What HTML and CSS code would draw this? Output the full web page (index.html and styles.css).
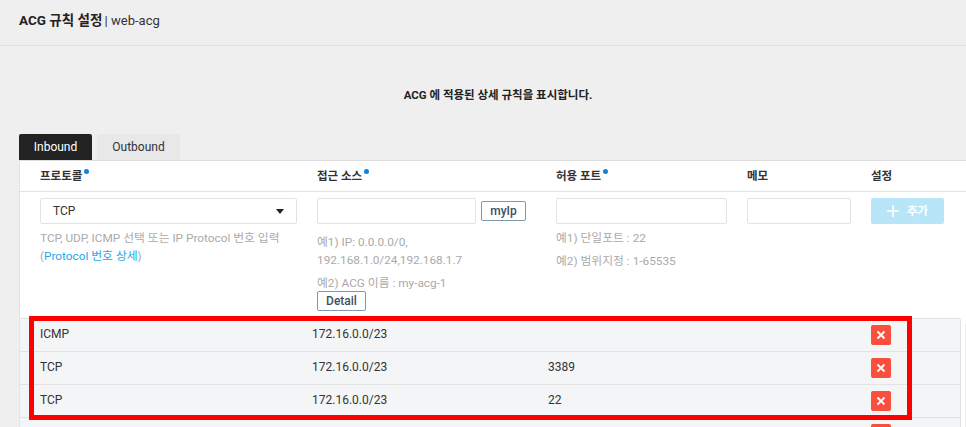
FILE: index.html
```html
<!DOCTYPE html>
<html lang="ko">
<head>
<meta charset="utf-8">
<title>ACG 규칙 설정</title>
<link rel="stylesheet" href="styles.css">
</head>
<body>
<header class="top"><strong>ACG 규칙 설정</strong> | web-acg</header>
<p class="notice">ACG 에 적용된 상세 규칙을 표시합니다.</p>
<nav class="tabs">
  <span class="tab active">Inbound</span>
  <span class="tab">Outbound</span>
</nav>
<section class="panel">
  <div class="cols head">
    <div>프로토콜<i class="dot"></i></div>
    <div>접근 소스<i class="dot"></i></div>
    <div>허용 포트<i class="dot"></i></div>
    <div>메모</div>
    <div>설정</div>
  </div>
  <div class="cols form">
    <div>
      <div class="field select">TCP<span class="caret"></span></div>
      <p class="hint first">TCP, UDP, ICMP 선택 또는 IP Protocol 번호 입력<br>(<a class="link">Protocol 번호 상세</a>)</p>
    </div>
    <div>
      <div class="source">
        <div class="field src-input"></div>
        <span class="btn myip">myIp</span>
      </div>
      <p class="hint src1">예1) IP: 0.0.0.0/0,<br>192.168.1.0/24,192.168.1.7</p>
      <p class="hint src2">예2) ACG 이름 : my-acg-1</p>
      <span class="btn detail">Detail</span>
    </div>
    <div>
      <div class="field port"></div>
      <p class="hint port1">예1) 단일포트 : 22</p>
      <p class="hint port2">예2) 범위지정 : 1-65535</p>
    </div>
    <div><div class="field memo"></div></div>
    <div><div class="add"><svg width="12" height="12" viewBox="0 0 12 12"><path d="M6 0v12M0 6h12" stroke="#fff" stroke-width="1.6"/></svg><span>추가</span></div></div>
  </div>
  <div class="list">
    <div class="rows">
      <div class="row"><span class="c1">ICMP</span><span class="c2">172.16.0.0/23</span><span class="c3"></span><span class="del"><svg width="10" height="10" viewBox="0 0 10 10"><path d="M1.5 1.5l7 7M8.5 1.5l-7 7" stroke="#fff" stroke-width="1.8"/></svg></span></div>
      <div class="row"><span class="c1">TCP</span><span class="c2">172.16.0.0/23</span><span class="c3">3389</span><span class="del"><svg width="10" height="10" viewBox="0 0 10 10"><path d="M1.5 1.5l7 7M8.5 1.5l-7 7" stroke="#fff" stroke-width="1.8"/></svg></span></div>
      <div class="row"><span class="c1">TCP</span><span class="c2">172.16.0.0/23</span><span class="c3">22</span><span class="del"><svg width="10" height="10" viewBox="0 0 10 10"><path d="M1.5 1.5l7 7M8.5 1.5l-7 7" stroke="#fff" stroke-width="1.8"/></svg></span></div>
      <div class="row"><span class="c1"></span><span class="c2"></span><span class="c3"></span><span class="del"></span></div>
    </div>
    <div class="side"><div class="side-inner"></div></div>
  </div>
</section>
<div class="highlight"></div>
</body>
</html>
```
FILE: styles.css
```css
* { box-sizing: border-box; }
html, body { height: 100%; }
body {
  margin: 0;
  height: 427px;
  overflow: hidden;
  position: relative;
  background: #efefef;
  color: #333;
  font: 12px/18px Roboto, "Noto Sans CJK KR", sans-serif;
}
.top {
  height: 46px;
  padding: 11px 0 0 19px;
  border-bottom: 1px solid #e2e2e2;
  font-size: 13px;
  line-height: 18px;
}
.top strong { color: #222; font-size: 13.5px; margin-right: -1px; }
.notice {
  margin: 0;
  height: 88px;
  padding: 40px 0 0 30px;
  text-align: center;
  font-size: 11.5px;
  font-weight: 700;
  line-height: 18px;
  color: #222;
}
.tabs { display: flex; gap: 5px; padding-left: 19px; height: 26px; }
.tab {
  width: 83px;
  background: #e8e8e8;
  border-radius: 2px 2px 0 0;
  text-align: center;
  line-height: 26px;
  color: #333;
}
.tab.active { width: 73px; background: #222; color: #fff; }
.panel {
  margin-left: 19px;
  background: #fff;
  border-top: 1px solid #ddd;
  border-left: 1px solid #e4e4e4;
  height: 267px;
  overflow: hidden;
}
.cols {
  display: grid;
  grid-template-columns: 277px 239px 191px 124px 1fr;
  padding-left: 20px;
}
.head {
  height: 31px;
  border-bottom: 1px solid #e2e2e2;
  font-weight: 700;
  color: #333;
  padding-top: 6px;
  font-size: 11.5px;
}
.dot {
  display: inline-block;
  width: 5px;
  height: 5px;
  margin-left: 2px;
  border-radius: 50%;
  background: #0a84e0;
  vertical-align: 6px;
}
.form { height: 126px; padding-top: 6px; }
.field {
  height: 26px;
  background: #fff;
  border: 1px solid #e2e2e2;
  border-radius: 2px;
}
.select {
  width: 257px;
  padding-left: 12px;
  line-height: 24px;
  display: flex;
  justify-content: space-between;
  align-items: center;
  color: #333;
}
.caret {
  margin-right: 12px;
  border-left: 4px solid transparent;
  border-right: 4px solid transparent;
  border-top: 5px solid #222;
}
.source { display: flex; align-items: center; gap: 5px; }
.src-input { width: 159px; }
.port { width: 171px; }
.memo { width: 104px; }
.btn {
  display: block;
  border: 1px solid #8097ac;
  border-radius: 2px;
  color: #3d4f63;
  text-align: center;
  font-weight: 500;
  background: #fff;
}
.myip { width: 45px; height: 20px; line-height: 18px; }
.detail { width: 49px; height: 20px; line-height: 18px; margin-top: -1px; }
.hint { margin: 0; font-size: 11.8px; color: #aaa; line-height: 18px; }
.hint.first { margin-top: 5px; }
.hint.src1 { margin-top: 9px; }
.hint.src2 { margin-top: 5px; }
.hint.port1 { margin-top: 5px; }
.hint.port2 { margin-top: 5px; }
.link { color: #1ea7e8; }
.add {
  width: 73px;
  height: 26px;
  background: #b8e5f8;
  border-radius: 2px;
  color: #fff;
  font-weight: 700;
  font-size: 11.5px;
  display: flex;
  align-items: center;
  justify-content: center;
  gap: 8px;
}
.list { display: flex; }
.rows { flex: 1; border-top: 1px solid #e2e2e2; }
.row {
  display: flex;
  align-items: center;
  height: 33px;
  background: #f4f5f7;
  border-bottom: 1px solid #e2e2e2;
  padding-left: 20px;
  color: #333;
}
.c1, .c2, .c3 { margin-bottom: 2px; }
.c1 { width: 272px; }
.c2 { width: 236px; }
.c3 { width: 323px; }
.del {
  width: 20px;
  height: 20px;
  background: #fb4f3d;
  border-radius: 2px;
  display: flex;
  align-items: center;
  justify-content: center;
}
.side {
  width: 6px;
  margin-top: 1px;
  border-left: 1px solid #e2e2e2;
  padding: 5px 0 0 4px;
}
.side-inner { height: 110px; background: #eeeeee; }
.highlight {
  position: absolute;
  left: 29px;
  top: 316px;
  width: 883px;
  height: 104px;
  border: 5px solid #ff0000;
}
```
